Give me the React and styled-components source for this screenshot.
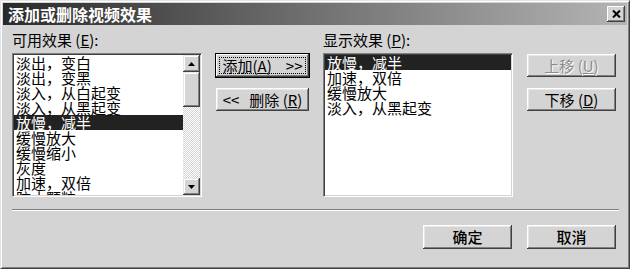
import React from "react";
import styled, { createGlobalStyle } from "styled-components";

const GlobalStyle = createGlobalStyle`
  html, body {
    margin: 0;
    padding: 0;
    background: #d4d4d4;
    overflow: hidden;
  }
  * {
    box-sizing: border-box;
  }
`;

const FONT = `"Noto Sans CJK SC", "Liberation Sans", sans-serif`;

const Window = styled.div`
  width: 630px;
  height: 269px;
  padding: 2px;
  background: #d4d4d4;
  border: 1px solid;
  border-color: #e4e4e4 #404040 #404040 #e4e4e4;
  box-shadow: inset 1px 1px #ffffff, inset -1px -1px #808080;
  font-family: ${FONT};
  font-size: 15px;
  color: #000;
  display: flex;
  flex-direction: column;
`;

const TitleBar = styled.div`
  height: 22px;
  display: flex;
  align-items: center;
  justify-content: space-between;
  padding: 0 2px 0 5px;
  background: linear-gradient(to right, #2a2a2a 0%, #6a6a6a 45%, #b4b4b4 100%);
`;

const Title = styled.span`
  color: #fff;
  font-weight: 700;
  font-size: 16px;
  line-height: 18px;
`;

const CloseButton = styled.div`
  width: 18px;
  height: 16px;
  background: #d4d4d4;
  box-shadow: inset -1px -1px #404040, inset 1px 1px #ffffff,
    inset -2px -2px #808080;
  display: flex;
  align-items: center;
  justify-content: center;
`;

const Body = styled.div`
  padding: 7px 10px 0 9px;
  display: flex;
  flex-direction: column;
`;

const Grid = styled.div`
  display: grid;
  grid-template-columns: 190px 95px 190px 91px;
  grid-template-rows: 16px 144px;
  column-gap: 13px;
  row-gap: 5px;
`;

const Label = styled.div`
  grid-column: ${(p) => p.$col};
  grid-row: 1;
  line-height: 16px;
  white-space: nowrap;
`;

const ListBox = styled.div`
  grid-row: 2;
  grid-column: ${(p) => p.$col};
  background: #fff;
  border: 1px solid;
  border-color: #808080 #ffffff #ffffff #808080;
  box-shadow: inset 1px 1px #404040, inset -1px -1px #d4d4d4;
  padding: 1px;
  display: flex;
  overflow: hidden;
`;

const Items = styled.div`
  flex: 1;
  overflow: hidden;
`;

const Item = styled.div`
  height: 15px;
  line-height: 15px;
  font-size: 15px;
  padding-left: 2px;
  white-space: nowrap;
  background: ${(p) => (p.$selected ? "#222222" : "transparent")};
  color: ${(p) => (p.$selected ? "#ffffff" : "#000000")};
`;

const ScrollBar = styled.div`
  width: 17px;
  display: flex;
  flex-direction: column;
  background-color: #ffffff;
  background-image: repeating-conic-gradient(#d4d4d4 0 25%, #ffffff 0 50%);
  background-size: 2px 2px;
`;

const ScrollButton = styled.div`
  height: ${(p) => p.$h || 17}px;
  background: #d4d4d4;
  box-shadow: inset -1px -1px #404040, inset 1px 1px #e8e8e8,
    inset -2px -2px #808080, inset 2px 2px #ffffff;
  display: flex;
  align-items: center;
  justify-content: center;
`;

const Track = styled.div`
  flex: 1;
`;

const ButtonColumn = styled.div`
  grid-row: 2;
  grid-column: ${(p) => p.$col};
  display: flex;
  flex-direction: column;
  gap: 9px;
`;

const Button = styled.div`
  position: relative;
  height: ${(p) => p.$h || 25}px;
  width: ${(p) => (p.$w ? `${p.$w}px` : "auto")};
  background: #d4d4d4;
  border: 1px solid ${(p) => (p.$default ? "#000000" : "transparent")};
  box-shadow: ${(p) =>
    p.$default
      ? "inset -1px -1px #404040, inset 1px 1px #ffffff, inset -2px -2px #808080"
      : "inset -1px -1px #404040, inset 1px 1px #ffffff, inset -2px -2px #808080, inset 2px 2px #e8e8e8"};
  display: flex;
  align-items: center;
  justify-content: center;
  gap: ${(p) => p.$gap || 0}px;
  font-size: 15px;
  line-height: 16px;
  white-space: nowrap;
  color: ${(p) => (p.$disabled ? "#8c8c8c" : "#000")};
  text-shadow: ${(p) => (p.$disabled ? "1px 1px #ffffff" : "none")};
  font-weight: ${(p) => (p.$bold ? 500 : 400)};

  &::after {
    content: "";
    display: ${(p) => (p.$focus ? "block" : "none")};
    position: absolute;
    inset: 3px;
    border: 1px dotted #000;
  }
`;

const Separator = styled.div`
  margin-top: 12px;
  margin-right: -2px;
  height: 2px;
  border-top: 1px solid #808080;
  border-bottom: 1px solid #ffffff;
`;

const Footer = styled.div`
  margin-top: 13px;
  display: flex;
  justify-content: flex-end;
  gap: 13px;
`;

const Arrow = ({ up }) => (
  <svg width="7" height="4" viewBox="0 0 7 4">
    <polygon points={up ? "3.5,0 7,4 0,4" : "0,0 7,0 3.5,4"} fill="#000" />
  </svg>
);

const available = [
  "淡出，变白",
  "淡出，变黑",
  "淡入，从白起变",
  "淡入，从黑起变",
  "放慢，减半",
  "缓慢放大",
  "缓慢缩小",
  "灰度",
  "加速，双倍",
  "防止颗粒",
];

const shown = ["放慢，减半", "加速，双倍", "缓慢放大", "淡入，从黑起变"];

export default function App() {
  return (
    <>
      <GlobalStyle />
      <Window>
        <TitleBar>
          <Title>添加或删除视频效果</Title>
          <CloseButton>
            <svg width="9" height="8" viewBox="0 0 9 8">
              <path d="M1 0.5 L8 7.5 M8 0.5 L1 7.5" stroke="#000" strokeWidth="2" />
            </svg>
          </CloseButton>
        </TitleBar>
        <Body>
          <Grid>
            <Label $col={1}>
              可用效果 (<u>E</u>):
            </Label>
            <Label $col={3}>
              显示效果 (<u>P</u>):
            </Label>
            <ListBox $col={1}>
              <Items>
                {available.map((name, i) => (
                  <Item key={name} $selected={i === 4}>
                    {name}
                  </Item>
                ))}
              </Items>
              <ScrollBar>
                <ScrollButton>
                  <Arrow up />
                </ScrollButton>
                <ScrollButton $h={35} />
                <Track />
                <ScrollButton>
                  <Arrow />
                </ScrollButton>
              </ScrollBar>
            </ListBox>
            <ButtonColumn $col={2}>
              <Button $default $focus $gap={14}>
                <span>
                  添加(<u>A</u>)
                </span>
                <span>&gt;&gt;</span>
              </Button>
              <Button $gap={10}>
                <span>&lt;&lt;</span>
                <span>
                  删除 (<u>R</u>)
                </span>
              </Button>
            </ButtonColumn>
            <ListBox $col={3}>
              <Items>
                {shown.map((name, i) => (
                  <Item key={name} $selected={i === 0}>
                    {name}
                  </Item>
                ))}
              </Items>
            </ListBox>
            <ButtonColumn $col={4}>
              <Button $disabled>
                上移 (<u>U</u>)
              </Button>
              <Button>
                下移 (<u>D</u>)
              </Button>
            </ButtonColumn>
          </Grid>
          <Separator />
          <Footer>
            <Button $w={91} $h={26} $bold>
              确定
            </Button>
            <Button $w={91} $h={26} $bold>
              取消
            </Button>
          </Footer>
        </Body>
      </Window>
    </>
  );
}
